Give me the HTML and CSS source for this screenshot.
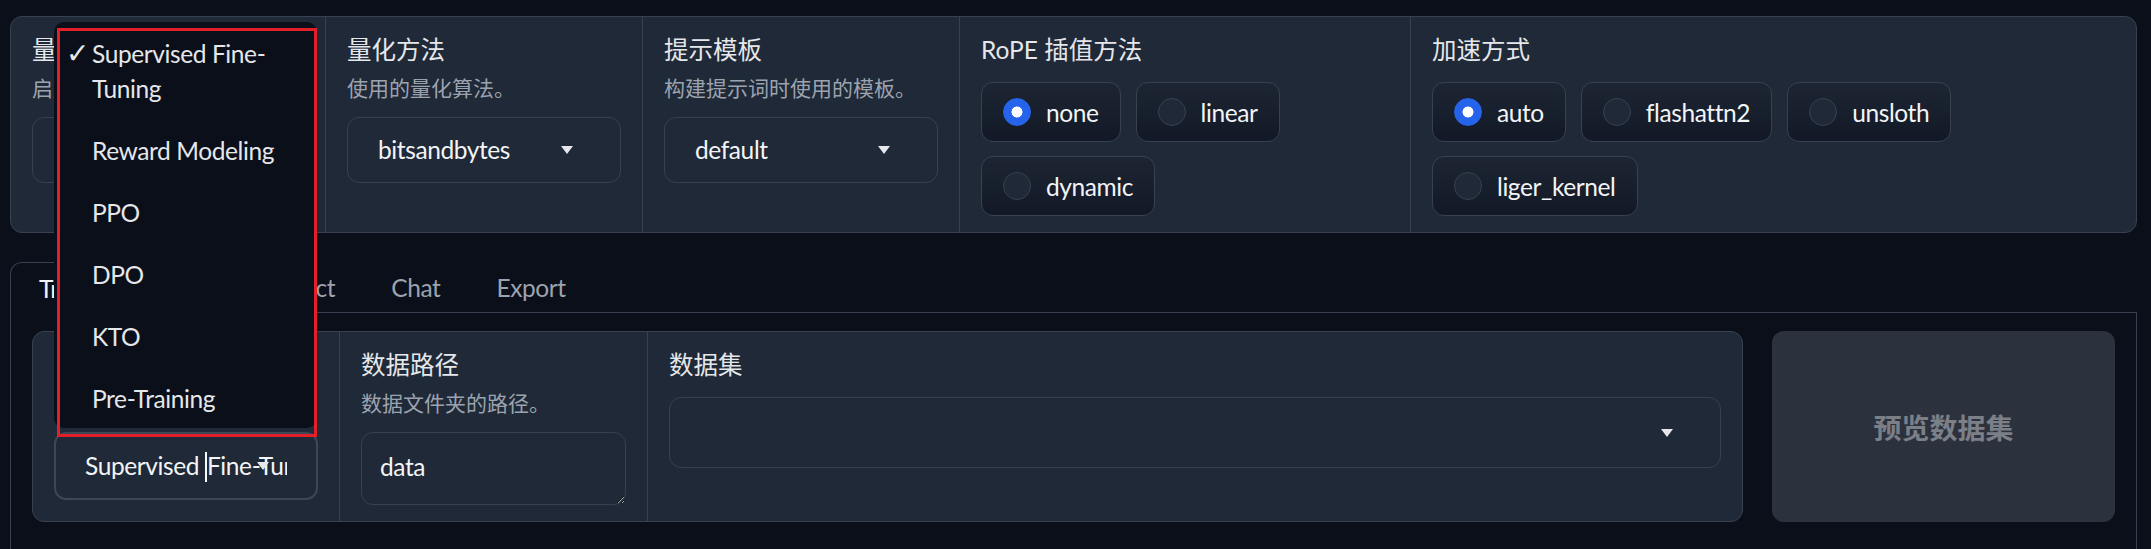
FILE: index.html
```html
<!DOCTYPE html>
<html lang="zh">
<head>
<meta charset="utf-8">
<title>LLaMA Board</title>
<link rel="stylesheet" href="styles.css">
</head>
<body>
<div class="page">
  <div class="card top-card">
    <div class="col c1">
      <div class="head">
        <div class="label">量化等级</div>
        <div class="info">启用量化（QLoRA）。</div>
      </div>
      <div class="select h66"><span class="val">none</span><span class="arrow"></span></div>
    </div>
    <div class="col c2">
      <div class="head">
        <div class="label">量化方法</div>
        <div class="info">使用的量化算法。</div>
      </div>
      <div class="select h66"><span class="val">bitsandbytes</span><span class="arrow"></span></div>
    </div>
    <div class="col c3">
      <div class="head">
        <div class="label">提示模板</div>
        <div class="info">构建提示词时使用的模板。</div>
      </div>
      <div class="select h66"><span class="val">default</span><span class="arrow"></span></div>
    </div>
    <div class="col c4">
      <div class="head">
        <div class="label">RoPE 插值方法</div>
      </div>
      <div class="radios">
        <div class="radio"><span class="dot checked"></span><span>none</span></div>
        <div class="radio"><span class="dot"></span><span>linear</span></div>
        <div class="radio"><span class="dot"></span><span>dynamic</span></div>
      </div>
    </div>
    <div class="col c5">
      <div class="head">
        <div class="label">加速方式</div>
      </div>
      <div class="radios">
        <div class="radio"><span class="dot checked"></span><span>auto</span></div>
        <div class="radio"><span class="dot"></span><span>flashattn2</span></div>
        <div class="radio"><span class="dot"></span><span>unsloth</span></div>
        <div class="radio"><span class="dot"></span><span>liger_kernel</span></div>
      </div>
    </div>
  </div>

  <div class="tabs">
    <div class="tab-nav">
      <div class="tab selected">Train</div>
      <div class="tab">Evaluate &amp; Predict</div>
      <div class="tab">Chat</div>
      <div class="tab">Export</div>
    </div>
    <div class="tabitem">
      <div class="row">
        <div class="card form">
          <div class="col b1">
            <div class="head">
              <div class="label">训练阶段</div>
              <div class="info">目前采用的训练方式。</div>
            </div>
            <div class="select focused"><span class="val">Supervised <span class="caret"></span>Fine-Tuning</span><span class="arrow"></span></div>
          </div>
          <div class="col b2">
            <div class="head">
              <div class="label">数据路径</div>
              <div class="info">数据文件夹的路径。</div>
            </div>
            <textarea class="textarea">data</textarea>
          </div>
          <div class="col b3">
            <div class="head">
              <div class="label">数据集</div>
            </div>
            <div class="select h71"><span class="val"></span><span class="arrow"></span></div>
          </div>
        </div>
        <button class="btn">预览数据集</button>
      </div>
    </div>
  </div>

  <ul class="menu">
    <li class="opt"><span class="check">✓</span><span class="opt-text">Supervised Fine-Tuning</span></li>
    <li class="opt"><span class="check"></span><span class="opt-text">Reward Modeling</span></li>
    <li class="opt"><span class="check"></span><span class="opt-text">PPO</span></li>
    <li class="opt"><span class="check"></span><span class="opt-text">DPO</span></li>
    <li class="opt"><span class="check"></span><span class="opt-text">KTO</span></li>
    <li class="opt"><span class="check"></span><span class="opt-text">Pre-Training</span></li>
  </ul>
  <div class="annot"></div>
</div>
</body>
</html>
```

FILE: styles.css
```css
* { box-sizing: border-box; }

html, body {
  margin: 0;
  background: #0b0f19;
  overflow: hidden;
}

body {
  font-family: Lato, "Noto Sans CJK SC", sans-serif;
  font-size: 24.5px;
  letter-spacing: -0.4px;
  color: #e5e7eb;
}

.page {
  position: relative;
  padding: 16px 14px 0 10px;
}

.card {
  background: #1f2937;
  border: 1px solid #374151;
  border-radius: 12px;
  display: flex;
}

.col {
  padding: 17px 21px 16px;
  min-width: 0;
}

.col + .col { border-left: 1px solid #374151; }

.c1 { width: 314px; }
.c2 { width: 317px; }
.c3 { width: 317px; }
.c4 { width: 451px; }
.c5 { flex: 1; }

.head {
  display: flex;
  flex-direction: column;
  gap: 9px;
  margin-bottom: 16px;
}

.label {
  font-size: 24.5px;
  line-height: 32px;
  letter-spacing: 0;
  color: #e5e7eb;
  white-space: nowrap;
}

.info {
  font-size: 21px;
  line-height: 26px;
  letter-spacing: 0;
  color: #9ca3af;
  white-space: nowrap;
}

.select {
  position: relative;
  display: flex;
  align-items: center;
  height: 66px;
  padding: 0 30px;
  border: 1px solid #374151;
  border-radius: 12px;
  background: #1f2937;
  color: #f3f4f6;
}

.h71 { height: 71px; }

.select.focused {
  height: 68px;
  border: 2px solid #3d4757;
  padding: 0 29px 0 29px;
}

.val {
  flex: 1;
  min-width: 0;
  overflow: hidden;
  white-space: nowrap;
  line-height: 32px;
}

.caret {
  display: inline-block;
  width: 2px;
  height: 30px;
  background: #f9fafb;
  vertical-align: middle;
  margin-top: -4px;
}

.arrow {
  position: absolute;
  right: 47px;
  top: 50%;
  margin-top: -4px;
  width: 0;
  height: 0;
  border-left: 6.5px solid transparent;
  border-right: 6.5px solid transparent;
  border-top: 8px solid #e5e7eb;
}

.radios {
  display: flex;
  flex-wrap: wrap;
  gap: 14px 15px;
}

.radio {
  display: flex;
  align-items: center;
  gap: 15px;
  height: 60px;
  padding: 0 21px;
  border: 1px solid #374151;
  border-radius: 12px;
  background: linear-gradient(to bottom, #1d2533, #121826);
  color: #f3f4f6;
  white-space: nowrap;
}

.dot {
  width: 28px;
  height: 28px;
  border-radius: 50%;
  border: 1px solid #374151;
  background: #1f2937;
  flex: none;
}

.dot.checked {
  border-color: #2563eb;
  background: radial-gradient(circle, #ffffff 0 5.2px, #2563eb 5.8px);
}

/* tabs */
.tabs { margin-top: 29px; }

.tab-nav {
  display: flex;
  border-bottom: 1px solid #374151;
}

.tab {
  height: 50px;
  padding: 0 27px;
  display: flex;
  align-items: center;
  color: #9ca3af;
  border: 1px solid transparent;
  border-bottom: none;
  white-space: nowrap;
}

.tab.selected {
  color: #f3f4f6;
  border-color: #374151;
  border-radius: 12px 12px 0 0;
  background: #0b0f19;
  height: 51px;
  margin-bottom: -1px;
  padding-left: 28px;
}

.tabitem {
  border: 1px solid #374151;
  border-top: none;
  padding: 18px 21px 40px;
}

.row {
  display: flex;
  gap: 29px;
}

.form { flex: 1; min-width: 0; }

.b1 { width: 306px; }
.b2 { width: 308px; }
.b3 { flex: 1; }

.textarea {
  display: block;
  width: 100%;
  height: 73px;
  padding: 17px 18px;
  border: 1px solid #374151;
  border-radius: 12px;
  background: #1f2937;
  color: #f3f4f6;
  font-family: Lato, "Noto Sans CJK SC", sans-serif;
  font-size: 24.5px;
  letter-spacing: -0.4px;
  line-height: 34px;
  resize: vertical;
  color-scheme: dark;
  outline: none;
}

.btn {
  width: 343px;
  flex: none;
  border: none;
  border-radius: 12px;
  background: #2c323d;
  color: #7b7f87;
  font-family: Lato, "Noto Sans CJK SC", sans-serif;
  font-size: 28px;
  font-weight: 700;
}

/* open dropdown menu */
.menu {
  position: absolute;
  left: 54px;
  top: 22px;
  width: 263px;
  height: 406px;
  margin: 0;
  padding: 0;
  list-style: none;
  background: #0b0f19;
  border-radius: 10px;
  z-index: 5;
}

.opt {
  display: flex;
  padding: 13.5px 14px 13.5px 12px;
  line-height: 35px;
  color: #e5e7eb;
}

.check {
  width: 26px;
  flex: none;
  font-family: "DejaVu Sans", sans-serif;
  font-size: 28px;
  letter-spacing: 0;
}

.annot {
  position: absolute;
  left: 57px;
  top: 28px;
  width: 260px;
  height: 409px;
  border: 3px solid #e3202a;
  z-index: 6;
}
```
